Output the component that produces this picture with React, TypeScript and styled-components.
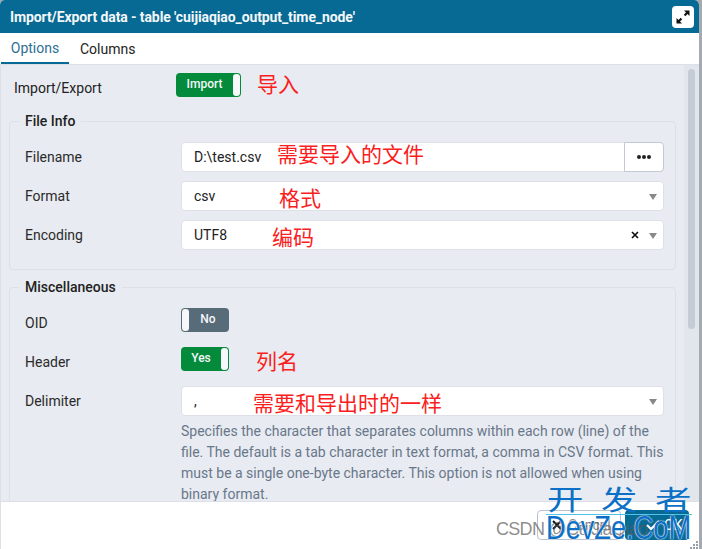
import { FC, ReactNode } from "react";
import styled, { createGlobalStyle } from "styled-components";

const BORDER = "#dde0e6";
const TEXT = "#222222";
const HELP = "#68778a";
const BLUE = "#066a94";
const GREEN = "#038a3a";
const RED = "#fb2020";
const MARK = "#0b70c6";

const GlobalStyle = createGlobalStyle`
  html, body {
    margin: 0;
    padding: 0;
    background: #a5a9b0;
  }
  * {
    box-sizing: border-box;
  }
`;

const Dialog = styled.div`
  position: relative;
  width: 699px;
  height: 549px;
  display: flex;
  flex-direction: column;
  overflow: hidden;
  border-radius: 5px 5px 0 0;
  background: #fff;
  font-family: Roboto, "Liberation Sans", sans-serif;
  font-size: 14px;
  color: ${TEXT};
`;

const TitleBar = styled.div`
  flex: none;
  height: 33px;
  display: flex;
  align-items: center;
  justify-content: space-between;
  padding: 0 5px 0 10px;
  background: ${BLUE};
  color: #f4f7fa;
  font-weight: 700;
  font-size: 14px;
  letter-spacing: -0.1px;
`;

const ExpandButton = styled.div`
  width: 22px;
  height: 22px;
  display: flex;
  align-items: center;
  justify-content: center;
  background: #fff;
  border-radius: 4px;
`;

const Tabs = styled.div`
  flex: none;
  height: 32px;
  display: flex;
  padding-left: 1px;
  background: #fff;
  border-bottom: 1px solid ${BORDER};
`;

const Tab = styled.div<{ $active?: boolean }>`
  height: 31px;
  padding: 0 10px;
  display: flex;
  align-items: center;
  width: ${({ $active }) => ($active ? "68px" : "auto")};
  justify-content: center;
  margin-right: ${({ $active }) => ($active ? "1px" : "0")};
  font-size: 14px;
  color: ${({ $active }) => ($active ? "#2c6f95" : "#222")};
  border-bottom: ${({ $active }) => ($active ? `2px solid ${BLUE}` : "none")};
`;

const Body = styled.div`
  flex: 1;
  min-height: 0;
  display: flex;
  background: #e8ebf1;
  border-left: 1px solid ${BORDER};
`;

const Content = styled.div`
  flex: 1;
  min-width: 0;
  overflow: hidden;
  padding: 8px 8px 0 8px;
`;

const Track = styled.div`
  flex: none;
  width: 15px;
  padding: 4px 4px 0;
  background: #e1e5ec;
`;

const Thumb = styled.div`
  width: 7px;
  height: 260px;
  border-radius: 4px;
  background: #c5ccd5;
`;

const TopRow = styled.div`
  display: flex;
  align-items: center;
  height: 24px;
  margin-bottom: 15px;
`;

const TopLabel = styled.div`
  width: 167px;
  padding: 6px 0 0 5px;
  font-size: 14px;
`;

const Fieldset = styled.fieldset`
  margin: 0 0 8px 0;
  padding: 3px 11px 19px 15px;
  border: 1px solid ${BORDER};
  border-radius: 4px;
  min-width: 0;
`;

const Legend = styled.legend`
  margin-left: -6px;
  padding: 0 6px;
  font-weight: 500;
  font-size: 14px;
  line-height: 18px;
  color: #222;
`;

const Row = styled.div`
  display: flex;
  align-items: flex-start;
  margin-top: 9px;
`;

const Label = styled.div`
  width: 156px;
  flex: none;
  line-height: 30px;
  font-size: 14px;
  color: #2a2a2a;
`;

const Field = styled.div`
  flex: 1;
  min-width: 0;
`;

const InputGroup = styled.div`
  height: 30px;
  display: flex;
  background: #fff;
  border: 1px solid ${BORDER};
  border-radius: 4px;
`;

const InputValue = styled.div`
  flex: 1;
  padding-left: 12px;
  line-height: 28px;
  font-size: 14px;
  color: #222;
`;

const DotsButton = styled.div`
  width: 40px;
  margin: -1px;
  display: flex;
  align-items: center;
  justify-content: center;
  gap: 1px;
  background: #fff;
  border: 1px solid #c2c8d4;
  border-radius: 0 4px 4px 0;
`;

const Dot = styled.span`
  width: 4px;
  height: 4px;
  border-radius: 50%;
  background: #222;
`;

const ClearIcon = styled.div`
  width: 10px;
  margin-right: 8px;
  display: flex;
  align-items: center;
`;

const Caret = styled.div`
  align-self: center;
  width: 0;
  height: 0;
  margin: 1px 6px 0 0;
  border-left: 4.5px solid transparent;
  border-right: 4.5px solid transparent;
  border-top: 6px solid #888;
`;

const Help = styled.div`
  margin: 5px 0 0;
  font-size: 14px;
  line-height: 21px;
  color: ${HELP};
`;

const Toggle = styled.div<{ $on: boolean; $width: number }>`
  width: ${({ $width }) => $width}px;
  height: 24px;
  display: flex;
  flex-direction: ${({ $on }) => ($on ? "row" : "row-reverse")};
  padding: 1px;
  border-radius: 4px;
  background: ${({ $on }) => ($on ? GREEN : "#586b78")};
  color: #f4f7fa;
  font-size: 12px;
  font-weight: 500;
`;

const ToggleText = styled.div`
  flex: 1;
  text-align: center;
  line-height: 20px;
  padding-right: 1px;
`;

const ToggleKnob = styled.div`
  width: 7px;
  background: #f6f8fa;
  border-radius: 3px;
`;

const Footer = styled.div`
  flex: none;
  height: 48px;
  display: flex;
  align-items: center;
  justify-content: flex-end;
  gap: 4px;
  padding: 0 10px 2px 0;
  background: #fff;
  border-top: 1px solid ${BORDER};
  border-left: 1px solid ${BORDER};
`;

const CancelButton = styled.div`
  width: 84px;
  height: 30px;
  display: flex;
  align-items: center;
  gap: 5px;
  padding-left: 13px;
  border: 1px solid #b9c2d0;
  border-radius: 4px;
  color: #8a8a8a;
  font-size: 14px;
`;

const OkButton = styled.div`
  width: 64px;
  height: 30px;
  display: flex;
  align-items: center;
  gap: 4px;
  padding-left: 21px;
  border-radius: 4px;
  background: ${BLUE};
  color: #fff;
  font-size: 14px;
`;

const ResizeGrip = styled.svg`
  position: absolute;
  right: 0;
  bottom: 0;
`;

const Note = styled.div<{ $x: number; $y: number }>`
  position: absolute;
  left: ${({ $x }) => $x}px;
  top: ${({ $y }) => $y}px;
  font-family: "Noto Sans CJK SC", sans-serif;
  font-size: 21px;
  line-height: 28px;
  white-space: nowrap;
  color: ${RED};
`;

const CsdnMark = styled.div`
  position: absolute;
  left: 496px;
  top: 519px;
  font-family: "Liberation Sans", sans-serif;
  font-size: 18px;
  line-height: 20px;
  letter-spacing: -0.7px;
  white-space: nowrap;
  color: rgba(90, 90, 90, 0.7);
`;

const SiteMarkCn = styled.div`
  position: absolute;
  left: 547px;
  top: 479px;
  width: 135px;
  display: flex;
  justify-content: space-between;
  font-family: "Noto Sans CJK SC", sans-serif;
  font-size: 27px;
  line-height: 40px;
  color: ${MARK};
`;

const SiteMarkChar = styled.span`
  display: block;
  transform: scaleX(1.35);
  transform-origin: left center;
`;

const SiteMarkRule = styled.div`
  position: absolute;
  left: 546px;
  top: 514px;
  width: 146px;
  height: 1px;
  background: #4fc3ee;
`;

const SiteMarkEn = styled.div`
  position: absolute;
  left: 546px;
  top: 508px;
  font-family: "Liberation Sans", sans-serif;
  font-size: 34px;
  line-height: 38px;
  white-space: nowrap;
  color: ${MARK};
  text-shadow: 0 0 2px #ffffff, 0 0 1px #ffffff;
  transform: scaleX(0.8);
  transform-origin: left center;
`;

interface FormRowProps {
  label: string;
  children: ReactNode;
}

const FormRow: FC<FormRowProps> = ({ label, children }) => (
  <Row>
    <Label>{label}</Label>
    <Field>{children}</Field>
  </Row>
);

const App: FC = () => {
  return (
    <>
      <GlobalStyle />
      <Dialog>
        <TitleBar>
          <span>Import/Export data - table 'cuijiaqiao_output_time_node'</span>
          <ExpandButton>
            <svg width="16" height="16" viewBox="0 0 16 16" fill="#111">
              <path d="M9 1.5h5.5V7l-2-2-2.2 2.2-1.5-1.5L11 3.5z" />
              <path d="M7 14.5H1.5V9l2 2 2.2-2.2 1.5 1.5L5 12.5z" />
            </svg>
          </ExpandButton>
        </TitleBar>
        <Tabs>
          <Tab $active>Options</Tab>
          <Tab>Columns</Tab>
        </Tabs>
        <Body>
          <Content>
            <TopRow>
              <TopLabel>Import/Export</TopLabel>
              <Toggle $on $width={65}>
                <ToggleText>Import</ToggleText>
                <ToggleKnob />
              </Toggle>
            </TopRow>
            <Fieldset>
              <Legend>File Info</Legend>
              <FormRow label="Filename">
                <InputGroup>
                  <InputValue>D:\test.csv</InputValue>
                  <DotsButton>
                    <Dot />
                    <Dot />
                    <Dot />
                  </DotsButton>
                </InputGroup>
              </FormRow>
              <FormRow label="Format">
                <InputGroup>
                  <InputValue>csv</InputValue>
                  <Caret />
                </InputGroup>
              </FormRow>
              <FormRow label="Encoding">
                <InputGroup>
                  <InputValue>UTF8</InputValue>
                  <ClearIcon>
                    <svg width="8" height="8" viewBox="0 0 8 8" stroke="#111" strokeWidth="1.7">
                      <path d="M1 1l6 6M7 1L1 7" />
                    </svg>
                  </ClearIcon>
                  <Caret />
                </InputGroup>
              </FormRow>
            </Fieldset>
            <Fieldset>
              <Legend>Miscellaneous</Legend>
              <Row>
                <Label>OID</Label>
                <Toggle $on={false} $width={48}>
                  <ToggleText>No</ToggleText>
                  <ToggleKnob />
                </Toggle>
              </Row>
              <Row>
                <Label>Header</Label>
                <Toggle $on $width={48}>
                  <ToggleText>Yes</ToggleText>
                  <ToggleKnob />
                </Toggle>
              </Row>
              <FormRow label="Delimiter">
                <InputGroup>
                  <InputValue>,</InputValue>
                  <Caret />
                </InputGroup>
                <Help>
                  Specifies the character that separates columns within each row (line) of the
                  file. The default is a tab character in text format, a comma in CSV format. This
                  must be a single one-byte character. This option is not allowed when using
                  binary format.
                </Help>
              </FormRow>
            </Fieldset>
          </Content>
          <Track>
            <Thumb />
          </Track>
        </Body>
        <Footer>
          <CancelButton>
            <svg width="12" height="12" viewBox="0 0 12 12" stroke="#111" strokeWidth="2">
              <path d="M2 2l8 8M10 2l-8 8" />
            </svg>
            Cancel
          </CancelButton>
          <OkButton>
            <svg width="14" height="12" viewBox="0 0 14 12" fill="none" stroke="#fff" strokeWidth="2">
              <path d="M1 6l4 4 8-8" />
            </svg>
            OK
          </OkButton>
        </Footer>
        <ResizeGrip width="12" height="8" viewBox="0 0 12 8" fill="#9aa0a8">
          <rect x="9" y="0" width="2" height="2" />
          <rect x="6" y="3" width="2" height="2" />
          <rect x="9" y="3" width="2" height="2" />
          <rect x="3" y="6" width="2" height="2" />
          <rect x="6" y="6" width="2" height="2" />
          <rect x="9" y="6" width="2" height="2" />
        </ResizeGrip>

        <Note $x={257} $y={69}>导入</Note>
        <Note $x={277} $y={139}>需要导入的文件</Note>
        <Note $x={279} $y={183}>格式</Note>
        <Note $x={272} $y={222}>编码</Note>
        <Note $x={256} $y={346}>列名</Note>
        <Note $x={253} $y={388}>需要和导出时的一样</Note>

        <CsdnMark>CSDN @CuiJiaQiao</CsdnMark>
        <SiteMarkCn>
          <SiteMarkChar>开</SiteMarkChar>
          <SiteMarkChar>发</SiteMarkChar>
          <SiteMarkChar>者</SiteMarkChar>
        </SiteMarkCn>
        <SiteMarkRule />
        <SiteMarkEn>DevZe.CoM</SiteMarkEn>
      </Dialog>
    </>
  );
};

export default App;
